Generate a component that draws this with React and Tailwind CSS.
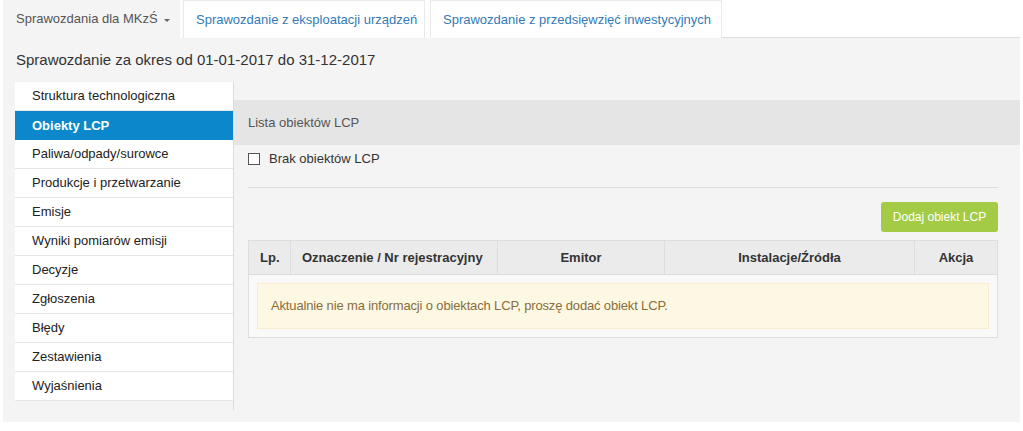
import React from "react";

const menu = [
  "Struktura technologiczna",
  "Obiekty LCP",
  "Paliwa/odpady/surowce",
  "Produkcje i przetwarzanie",
  "Emisje",
  "Wyniki pomiarów emisji",
  "Decyzje",
  "Zgłoszenia",
  "Błędy",
  "Zestawienia",
  "Wyjaśnienia",
];

function Tabs() {
  return (
    <div className="flex h-[38px] pl-[3px]">
      <div className="flex h-[38px] w-[177px] items-center bg-[#f4f4f4] pl-[13px] text-[13px] text-[#555]">
        Sprawozdania dla MKzŚ
        <span className="ml-[6px] mt-[2px] inline-block h-0 w-0 border-x-[3px] border-t-[3px] border-x-transparent border-t-[#666]" />
      </div>
      <div className="ml-[3px] flex h-[38px] w-[242px] items-center border border-b-0 border-[#eaeaea] bg-white pl-[12px] text-[13px] text-[#337ab7]">
        Sprawozdanie z eksploatacji urządzeń
      </div>
      <div className="ml-[5px] flex h-[38px] w-[292px] items-center border border-b-0 border-[#eaeaea] bg-white pl-[12px] text-[13px] text-[#337ab7]">
        Sprawozdanie z przedsięwzięć inwestycyjnych
      </div>
      <div className="mr-[3px] flex-1 border-b border-[#dedede]" />
    </div>
  );
}

function Sidebar() {
  return (
    <div className="w-[219px] shrink-0 border-r border-[#dcdcdc] pb-[9px]">
      {menu.map((item) => {
        const active = item === "Obiekty LCP";
        return (
          <div
            key={item}
            className={
              active
                ? "flex h-[29px] items-center bg-[#0a88cb] pl-[17px] text-[13px] font-bold text-white"
                : "flex h-[29px] items-center border-b border-[#e6e6e6] bg-white pl-[17px] text-[13px] text-[#222]"
            }
          >
            {item}
          </div>
        );
      })}
    </div>
  );
}

function Content() {
  return (
    <div className="flex-1 pt-[18px]">
      <div className="flex h-[45px] items-center bg-[#e5e5e5] pl-[14px] text-[13px] text-[#555]">
        Lista obiektów LCP
      </div>
      <div className="px-[14px] pr-[22px]">
        <label className="mt-[8px] flex h-[12px] items-center text-[13px] text-[#333]">
          <span className="inline-block h-[12px] w-[12px] border border-[#555] bg-white" />
          <span className="ml-[9px]">Brak obiektów LCP</span>
        </label>
        <div className="mt-[22px] border-t border-[#dddddd]" />
        <div className="mt-[14px] flex justify-end">
          <button className="h-[30px] w-[117px] rounded-[3px] bg-[#a3cb45] text-[12px] text-white">
            Dodaj obiekt LCP
          </button>
        </div>
        <div className="mt-[8px] border border-[#dddddd] bg-[#f9f9f9]">
          <div className="flex h-[34px] border-b border-[#dddddd] bg-[#ebebeb] text-[13px] font-bold text-[#333]">
            <div className="flex w-[42px] items-center border-r border-[#dddddd] pl-[11px]">Lp.</div>
            <div className="flex w-[207px] items-center border-r border-[#dddddd] pl-[11px]">Oznaczenie / Nr rejestracyjny</div>
            <div className="flex w-[167px] items-center justify-center border-r border-[#dddddd]">Emitor</div>
            <div className="flex w-[250px] items-center justify-center border-r border-[#dddddd]">Instalacje/Źródła</div>
            <div className="flex flex-1 items-center justify-center">Akcja</div>
          </div>
          <div className="px-[8px] py-[8px]">
            <div className="flex h-[46px] items-center border border-[#faebcc] bg-[#fcf8e3] pl-[13px] text-[13px] tracking-[-0.15px] text-[#8a6d3b]">
              Aktualnie nie ma informacji o obiektach LCP, proszę dodać obiekt LCP.
            </div>
          </div>
        </div>
      </div>
    </div>
  );
}

export default function App() {
  return (
    <div className="h-[431px] w-[1023px] bg-white font-['Liberation_Sans',Arial,sans-serif]">
      <Tabs />
      <div className="mx-[3px] h-[384px] bg-[#f4f4f4]">
        <div className="flex h-[44px] items-center pl-[13px] text-[15px] text-[#333]">
          Sprawozdanie za okres od 01-01-2017 do 31-12-2017
        </div>
        <div className="flex pl-[12px]">
          <Sidebar />
          <Content />
        </div>
      </div>
    </div>
  );
}
